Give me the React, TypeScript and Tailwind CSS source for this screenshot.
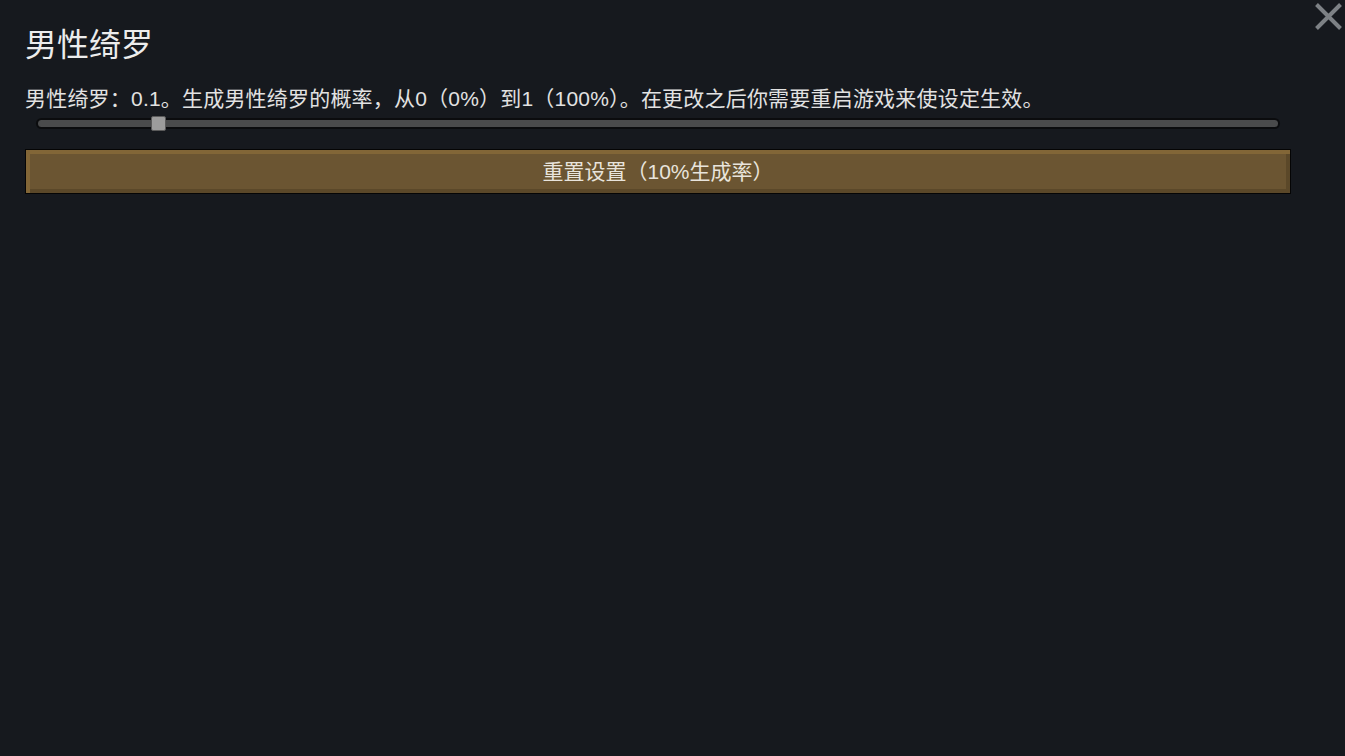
import React from 'react';

const font = { fontFamily: '"Liberation Sans", "Noto Sans CJK SC", sans-serif' };

export default function App() {
    const value = 0.1;

    return (
        <div className="relative w-[1345px] h-[756px] bg-[#16191e] text-[#e6e6e6] overflow-hidden" style={font}>
            {/* Close button */}
            <button className="absolute right-[2px] top-[2px] w-[29px] h-[29px] text-[#7d8185]">
                <svg viewBox="0 0 29 29" className="w-full h-full">
                    <path d="M2.5 2.5 L26.5 26.5 M26.5 2.5 L2.5 26.5" stroke="currentColor" strokeWidth="4" />
                </svg>
            </button>

            <div className="pl-[25px] pr-[55px] pt-[24px]">
                <h1 className="text-[32px] leading-[42px] text-[#ececec]">男性绮罗</h1>

                <p className="mt-[20px] text-[21px] leading-[26px] tracking-[0.2px] text-[#e2e2e2] whitespace-nowrap">
                    男性绮罗：0.1。生成男性绮罗的概率，从0（0%）到1（100%）。在更改之后你需要重启游戏来使设定生效。
                </p>

                {/* Slider */}
                <div className="relative mt-[4px] ml-[11px] mr-[10px] h-[15px] flex items-center">
                    <div className="w-full h-[11px] rounded-full bg-[#0b0c0e] p-[2px]">
                        <div className="w-full h-full rounded-full bg-[#4a4b4c]" />
                    </div>
                    <div
                        className="absolute top-0 w-[15px] h-[15px] rounded-[2px] bg-[#9c9c9c] border border-[#5a5a5a]"
                        style={{ left: `calc(${value * 100}% - 9px)` }}
                    />
                </div>

                {/* Reset button */}
                <button className="mt-[18px] w-[1266px] h-[45px] border border-[#050505] bg-[#6b5532] text-[21px] text-[#e8e4dc] shadow-[inset_4px_4px_0_#826637,inset_-4px_-4px_0_#5b4829]">
                    重置设置（10%生成率）
                </button>
            </div>
        </div>
    );
}
